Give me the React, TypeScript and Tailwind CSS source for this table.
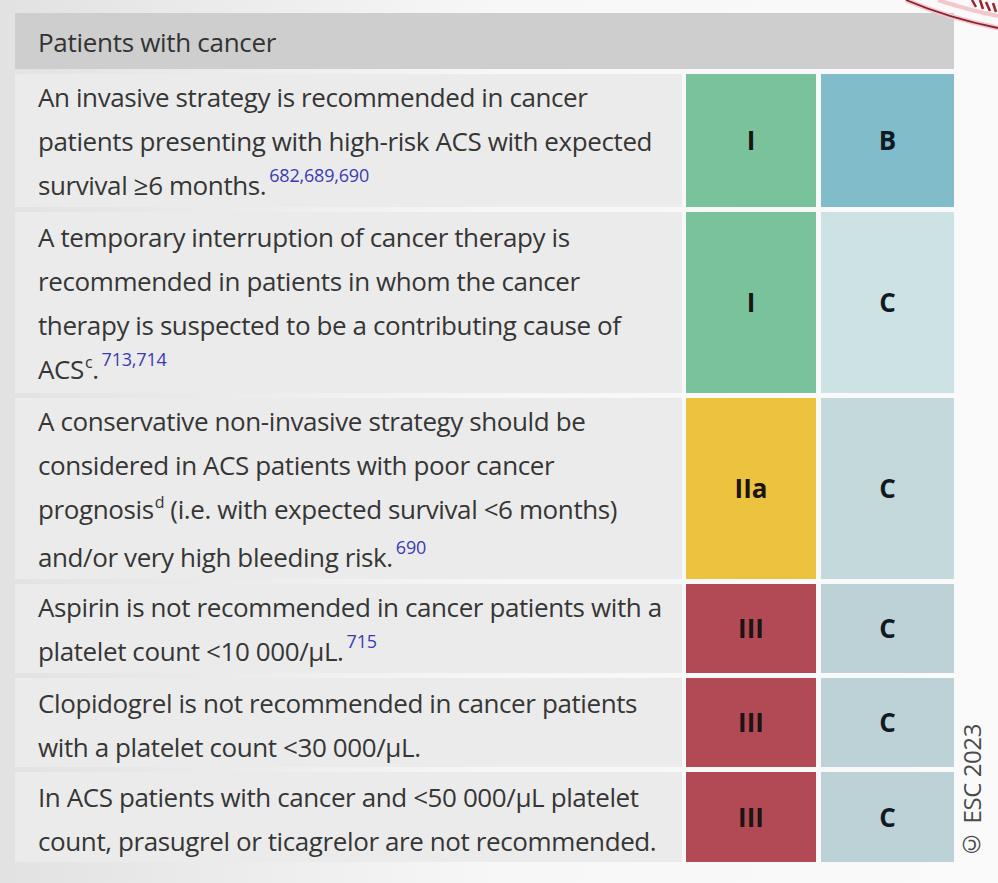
import React from "react";

type Row = {
  lines: React.ReactNode[];
  cls: string;
  level: string;
  clsBg: string;
  levelBg: string;
  h: string;
};

const Ref = ({ children }: { children: React.ReactNode }) => (
  <span className="relative -top-[13px] ml-[3px] text-[18px] text-[#3b3bb0] tracking-[-0.2px]">{children}</span>
);

const Note = ({ children }: { children: React.ReactNode }) => (
  <span className="relative -top-[11px] ml-[1px] text-[16px]">{children}</span>
);

const rows: Row[] = [
  {
    lines: [
      "An invasive strategy is recommended in cancer",
      "patients presenting with high-risk ACS with expected",
      <>
        survival ≥6 months.<Ref>682,689,690</Ref>
      </>,
    ],
    cls: "I",
    level: "B",
    clsBg: "bg-[#79c29b]",
    levelBg: "bg-[#80bcc9]",
    h: "h-[133px]",
  },
  {
    lines: [
      "A temporary interruption of cancer therapy is",
      "recommended in patients in whom the cancer",
      "therapy is suspected to be a contributing cause of",
      <>
        ACS<Note>c</Note>.<Ref>713,714</Ref>
      </>,
    ],
    cls: "I",
    level: "C",
    clsBg: "bg-[#79c29b]",
    levelBg: "bg-[#cde2e5]",
    h: "h-[181px]",
  },
  {
    lines: [
      "A conservative non-invasive strategy should be",
      "considered in ACS patients with poor cancer",
      <>
        prognosis<Note>d</Note> (i.e. with expected survival &lt;6 months)
      </>,
      <>
        and/or very high bleeding risk.<Ref>690</Ref>
      </>,
    ],
    cls: "IIa",
    level: "C",
    clsBg: "bg-[#ebc33f]",
    levelBg: "bg-[#c4d9dc]",
    h: "h-[181px]",
  },
  {
    lines: [
      "Aspirin is not recommended in cancer patients with a",
      <>
        platelet count &lt;10 000/µL.<Ref>715</Ref>
      </>,
    ],
    cls: "III",
    level: "C",
    clsBg: "bg-[#b24a55]",
    levelBg: "bg-[#bcd2d6]",
    h: "h-[89px]",
  },
  {
    lines: ["Clopidogrel is not recommended in cancer patients", "with a platelet count <30 000/µL."],
    cls: "III",
    level: "C",
    clsBg: "bg-[#b24a55]",
    levelBg: "bg-[#bcd2d6]",
    h: "h-[89px]",
  },
  {
    lines: [
      "In ACS patients with cancer and <50 000/µL platelet",
      "count, prasugrel or ticagrelor are not recommended.",
    ],
    cls: "III",
    level: "C",
    clsBg: "bg-[#b24a55]",
    levelBg: "bg-[#bcd2d6]",
    h: "h-[90px]",
  },
];

export default function App() {
  return (
    <div
      className="relative w-[998px] h-[883px] overflow-hidden bg-gradient-to-r from-[#e2e2e2] via-[#f7f7f7] to-[#fafafa]"
      style={{ fontFamily: "'Open Sans', Lato, sans-serif" }}
    >
      {/* red stamp edge, top right */}
      <svg className="absolute right-0 top-0" width="100" height="34" viewBox="0 0 100 34">
        <path d="M8 0 Q50 18 100 28" stroke="#f3c7cc" strokeWidth="5" fill="none" />
        <path d="M8 0 Q50 18 100 28" stroke="#8a2232" strokeWidth="1.8" fill="none" />
        <path d="M40 0 Q70 10 100 16" stroke="#f3c7cc" strokeWidth="4" fill="none" />
        <path d="M74 0 L78 7 M82 0 L85 9 M88 2 L92 11 M95 3 L98 12" stroke="#a0202e" strokeWidth="2.5" />
      </svg>

      <div className="flex pt-[13px] pl-[15px]">
        <div className="w-[939px] flex flex-col gap-[5px]">
          <div className="h-[56px] bg-[#cecece] flex items-center pl-[23px] pt-[2px] text-[26px] text-[#333] tracking-[-0.3px]">
            Patients with cancer
          </div>
          {rows.map((r, i) => (
            <div key={i} className={`flex gap-[4px] ${r.h}`}>
              <div className="w-[667px] bg-[#ebebeb] flex flex-col justify-center pl-[23px] pt-[4px] text-[26px] leading-[44px] text-[#363636] tracking-[-0.4px]">
                {r.lines.map((l, j) => (
                  <div key={j} className="whitespace-nowrap">
                    {l}
                  </div>
                ))}
              </div>
              <div className={`w-[130px] ${r.clsBg} flex items-center justify-center text-[26px] font-bold text-[#1a1414]`}>
                {r.cls}
              </div>
              <div className={`ml-[1px] w-[133px] ${r.levelBg} flex items-center justify-center text-[26px] font-bold text-[#111a22]`}>
                {r.level}
              </div>
            </div>
          ))}
        </div>
        <div className="flex-1 flex items-end">
          <div className="[writing-mode:vertical-rl] rotate-180 text-[24px] text-[#4a4a4a] whitespace-nowrap tracking-[-0.4px]">
            © ESC 2023
          </div>
        </div>
      </div>
    </div>
  );
}
